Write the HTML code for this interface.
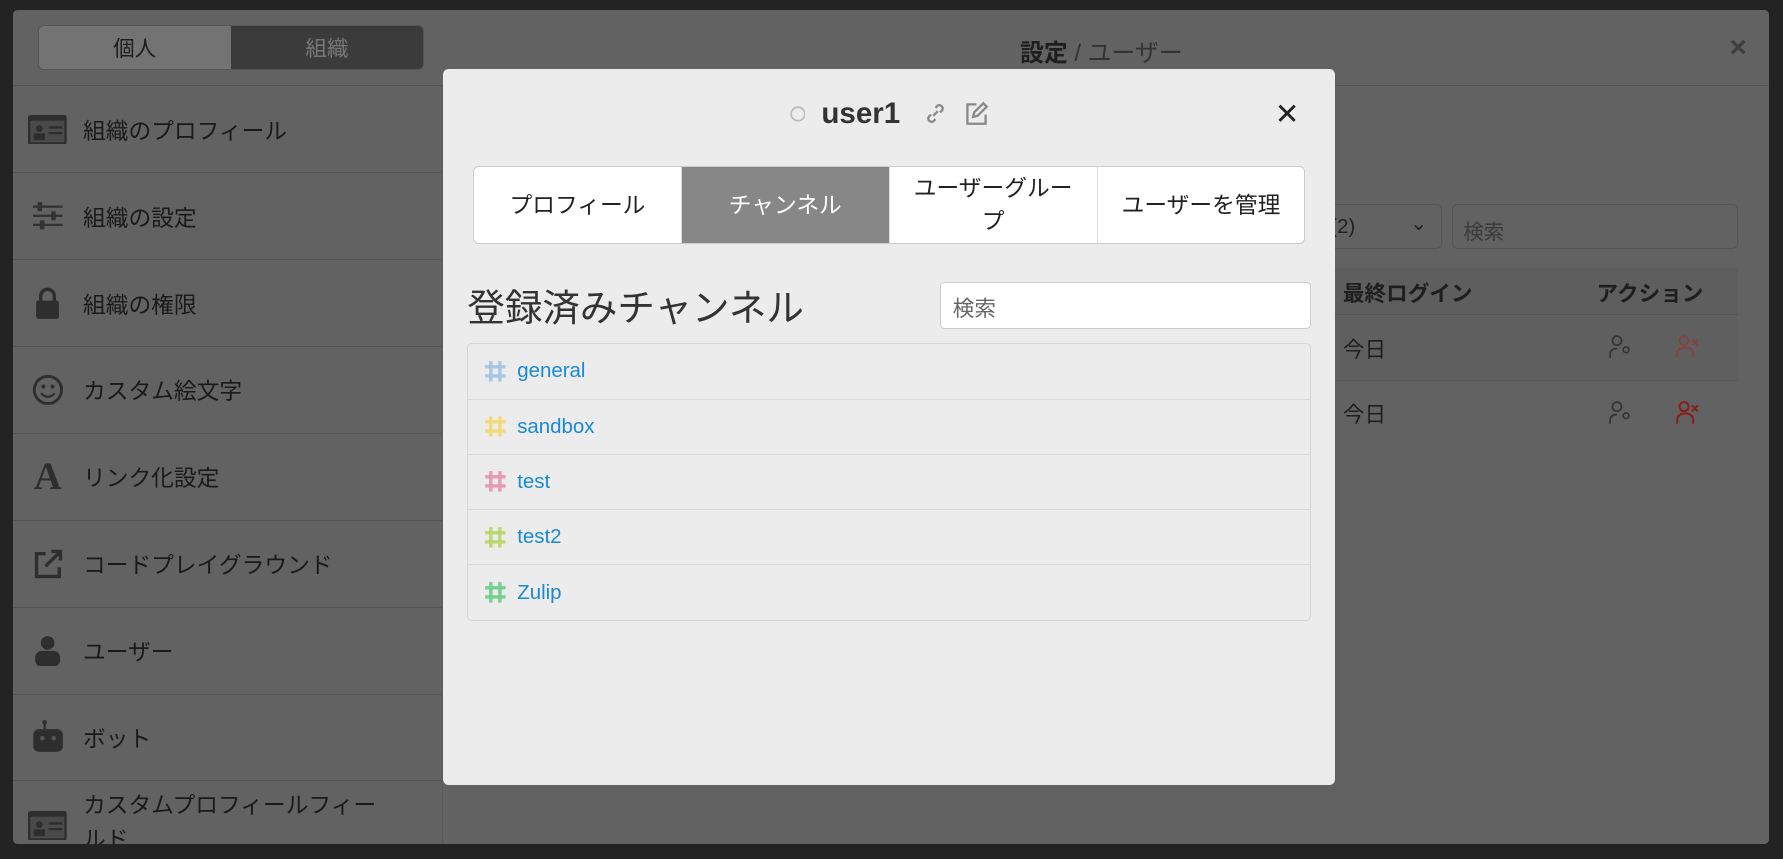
<!DOCTYPE html>
<html><head><meta charset="utf-8"><style>
*{box-sizing:border-box;margin:0;padding:0}
html,body{width:1783px;height:858px;overflow:hidden;background:#232323}
body{font-family:"Liberation Sans","Noto Sans CJK JP",sans-serif}
#w{position:absolute;left:0;top:0;width:1568px;height:755px;zoom:1.13712;background:#232323}
.panel{position:absolute;left:11px;top:9px;width:1545px;height:733px;background:#626262;border-radius:4px;overflow:hidden}
.side{position:absolute;left:0;top:67px;width:379px;bottom:0;border-right:1px solid #5a5a5a}
.row{height:76.4px;border-bottom:1px solid #555;display:flex;align-items:center;padding-left:14px;font-size:20px;color:#1a1a1a}
.row .ic{width:34px;height:30px;margin-right:14px;display:flex;align-items:center;justify-content:center}
.tog{position:absolute;left:22px;top:13px;width:340px;height:40px;border:1px solid #555;border-radius:5px;display:flex;overflow:hidden;font-size:19px}
.tog div{flex:1;display:flex;align-items:center;justify-content:center}
.hdrline{position:absolute;left:0;right:0;top:66px;border-top:1px solid #555}
.modal{position:absolute;left:390px;top:61px;width:784px;height:629px;background:#ececec;border-radius:5px}
.tabs{position:absolute;left:26px;top:85px;width:732px;height:69px;border:1px solid #ccc;border-radius:5px;display:flex;overflow:hidden;background:#fff}
.tabs div{flex:1;display:flex;align-items:center;justify-content:center;text-align:center;font-size:20px;color:#222;border-right:1px solid #ddd;line-height:1.45}
.list{position:absolute;left:21px;top:241px;width:742px;border:1px solid #d6d6d6;border-radius:4px}
.list div{height:48.5px;border-bottom:1px solid #d9d9d9;display:flex;align-items:center;padding-left:14px;font-size:18px;color:#1a8ad0}
.list div:last-child{border-bottom:none}
.list svg{margin-right:9px}
</style></head><body><div id="w">
<div class="panel">
 <div class="tog"><div style="background:#737373;color:#1e1e1e">個人</div><div style="background:#3b3b3b;color:#777">組織</div></div>
 <div style="position:absolute;left:886px;top:20px;font-size:21px;color:#1e1e1e"><b>設定</b> <span style="color:#333">/ ユーザー</span></div>
 <div style="position:absolute;left:1510px;top:18px;font-size:26px;color:#3e3e3e;font-weight:bold">×</div>
 <div class="hdrline"></div>
 <div class="side">
  <div class="row"><span class="ic"><svg width="34" height="26"><rect x="0" y="0" width="34" height="26" rx="2" fill="#2e2e2e"/><rect x="2" y="5" width="30" height="19" fill="#4a4a4a"/><circle cx="10" cy="12" r="3" fill="#2e2e2e"/><rect x="5" y="16" width="10" height="6" fill="#2e2e2e"/><rect x="18" y="10" width="12" height="2" fill="#2e2e2e"/><rect x="18" y="15" width="12" height="2" fill="#2e2e2e"/></svg></span>組織のプロフィール</div>
  <div class="row"><span class="ic"><svg width="26" height="26" fill="#333"><rect x="0" y="4" width="26" height="2"/><rect x="0" y="12" width="26" height="2"/><rect x="0" y="20" width="26" height="2"/><rect x="4" y="1" width="4" height="8"/><rect x="16" y="9" width="4" height="8"/><rect x="6" y="17" width="4" height="8"/></svg></span>組織の設定</div>
  <div class="row"><span class="ic"><svg width="22" height="28"><path d="M5 12V8a6 6 0 0112 0v4" stroke="#2e2e2e" stroke-width="3" fill="none"/><rect x="1" y="12" width="20" height="16" rx="2" fill="#2e2e2e"/></svg></span>組織の権限</div>
  <div class="row"><span class="ic"><svg width="28" height="28"><circle cx="14" cy="14" r="12" stroke="#2e2e2e" stroke-width="2.5" fill="none"/><circle cx="10" cy="11" r="1.8" fill="#2e2e2e"/><circle cx="18" cy="11" r="1.8" fill="#2e2e2e"/><path d="M8 17q6 6 12 0" stroke="#2e2e2e" stroke-width="2" fill="none"/></svg></span>カスタム絵文字</div>
  <div class="row"><span class="ic" style="font-family:'Liberation Serif',serif;font-size:34px;font-weight:bold;color:#2e2e2e">A</span>リンク化設定</div>
  <div class="row"><span class="ic"><svg width="28" height="28"><path d="M12 5H4v20h20v-8" stroke="#2e2e2e" stroke-width="3" fill="none"/><path d="M12 16L25 3M17 3h8v8" stroke="#2e2e2e" stroke-width="3" fill="none"/></svg></span>コードプレイグラウンド</div>
  <div class="row"><span class="ic"><svg width="24" height="28" fill="#2e2e2e"><circle cx="12" cy="7" r="6"/><rect x="1" y="14" width="22" height="14" rx="6"/></svg></span>ユーザー</div>
  <div class="row"><span class="ic"><svg width="30" height="30" fill="#2e2e2e"><circle cx="12" cy="2" r="2"/><rect x="11" y="2" width="2" height="6"/><rect x="2" y="8" width="26" height="20" rx="5"/><circle cx="10" cy="16" r="2" fill="#555"/><circle cx="20" cy="16" r="2" fill="#555"/></svg></span>ボット</div>
  <div class="row" style="align-items:flex-start;padding-top:6px;line-height:1.5"><span class="ic" style="margin-top:18px"><svg width="34" height="26"><rect x="0" y="0" width="34" height="26" rx="2" fill="#2e2e2e"/><rect x="2" y="5" width="30" height="19" fill="#4a4a4a"/><circle cx="10" cy="12" r="3" fill="#2e2e2e"/><rect x="5" y="16" width="10" height="6" fill="#2e2e2e"/><rect x="18" y="10" width="12" height="2" fill="#2e2e2e"/><rect x="18" y="15" width="12" height="2" fill="#2e2e2e"/></svg></span>カスタムプロフィールフィー<br>ルド</div>
 </div>
 <div style="position:absolute;left:1150px;top:170px;width:107px;height:40px;border:1px solid #555;border-radius:5px;font-size:18px;color:#222;padding:9px 8px">(2)<span style="position:absolute;right:12px;top:6px">⌄</span></div>
 <div style="position:absolute;left:1266px;top:170px;width:251px;height:40px;border:1px solid #555;border-radius:5px;font-size:18px;color:#3a3a3a;padding:9px 9px">検索</div>
 <div style="position:absolute;left:1150px;top:227px;width:367px;height:41px;background:#5e5e5e;border-bottom:1px solid #555;font-size:19px;font-weight:bold;color:#1e1e1e"><span style="position:absolute;left:20px;top:8px">最終ログイン</span><span style="position:absolute;left:243px;top:8px">アクション</span></div>
 <div style="position:absolute;left:1150px;top:268px;width:367px;height:58px;background:#5f5f5f;border-bottom:1px solid #585858;font-size:19px;color:#1e1e1e"><span style="position:absolute;left:20px;top:16px">今日</span></div>
 <div style="position:absolute;left:1170px;top:341px;font-size:19px;color:#1e1e1e">今日</div>
 <svg style="position:absolute;left:1404px;top:286px" width="80" height="90"><g stroke="#333" stroke-width="1.5" fill="none"><circle cx="7" cy="5" r="4"/><path d="M1 20v-3q0-5 6-5"/><circle cx="15" cy="13" r="2.5"/></g><g stroke="#884040" stroke-width="1.5" fill="none"><circle cx="66" cy="5" r="4"/><path d="M60 20v-3q0-6 7-6t7 6v3"/><path d="M73 4l5 5M78 4l-5 5"/></g><g transform="translate(0,58)" stroke="#333" stroke-width="1.5" fill="none"><circle cx="7" cy="5" r="4"/><path d="M1 20v-3q0-5 6-5"/><circle cx="15" cy="13" r="2.5"/></g><g transform="translate(0,58)" stroke="#8a1c1c" stroke-width="1.8" fill="none"><circle cx="66" cy="5" r="4"/><path d="M60 20v-3q0-6 7-6t7 6v3"/><path d="M73 4l5 5M78 4l-5 5"/></g></svg>
</div>
<div class="modal">
 <div style="position:absolute;left:0;right:0;top:24px;text-align:center;font-size:26px;font-weight:bold;color:#333;display:flex;justify-content:center;align-items:center;gap:14px">
  <svg width="14" height="14"><circle cx="7" cy="7" r="6" stroke="#bbb" stroke-width="1.5" fill="none"/></svg><span>user1</span>
  <svg width="22" height="22" style="margin-left:6px"><g stroke="#888" stroke-width="2" fill="none"><path d="M9 13l4-4"/><path d="M11 6l2-2a3 3 0 014 4l-2 2"/><path d="M11 16l-2 2a3 3 0 01-4-4l2-2"/></g></svg>
  <svg width="22" height="22"><g stroke="#888" stroke-width="2" fill="none"><path d="M11 3H3v17h16v-8"/><path d="M8 14l1-4 8-8 3 3-8 8z"/></g></svg>
 </div>
 <div style="position:absolute;left:731px;top:24px;font-size:26px;color:#222">✕</div>
 <div class="tabs"><div>プロフィール</div><div style="background:#878787;color:#fff">チャンネル</div><div>ユーザーグルー<br>プ</div><div style="border-right:none">ユーザーを管理</div></div>
 <div style="position:absolute;left:21px;top:183px;font-size:33px;color:#333">登録済みチャンネル</div>
 <div style="position:absolute;left:437px;top:187px;width:326px;height:41px;background:#fff;border:1px solid #ccc;border-radius:4px;font-size:19px;color:#666;padding:8px 10px">検索</div>
 <div class="list">
  <div><svg width="20" height="20" stroke="#a6c7e5" stroke-width="3"><path d="M6 1v18M14 1v18M1 6h18M1 14h18"/></svg>general</div>
  <div><svg width="20" height="20" stroke="#f4d87c" stroke-width="3"><path d="M6 1v18M14 1v18M1 6h18M1 14h18"/></svg>sandbox</div>
  <div><svg width="20" height="20" stroke="#e79ab5" stroke-width="3"><path d="M6 1v18M14 1v18M1 6h18M1 14h18"/></svg>test</div>
  <div><svg width="20" height="20" stroke="#bfd56f" stroke-width="3"><path d="M6 1v18M14 1v18M1 6h18M1 14h18"/></svg>test2</div>
  <div><svg width="20" height="20" stroke="#76ce90" stroke-width="3"><path d="M6 1v18M14 1v18M1 6h18M1 14h18"/></svg>Zulip</div>
 </div>
</div>
</div></body></html>
